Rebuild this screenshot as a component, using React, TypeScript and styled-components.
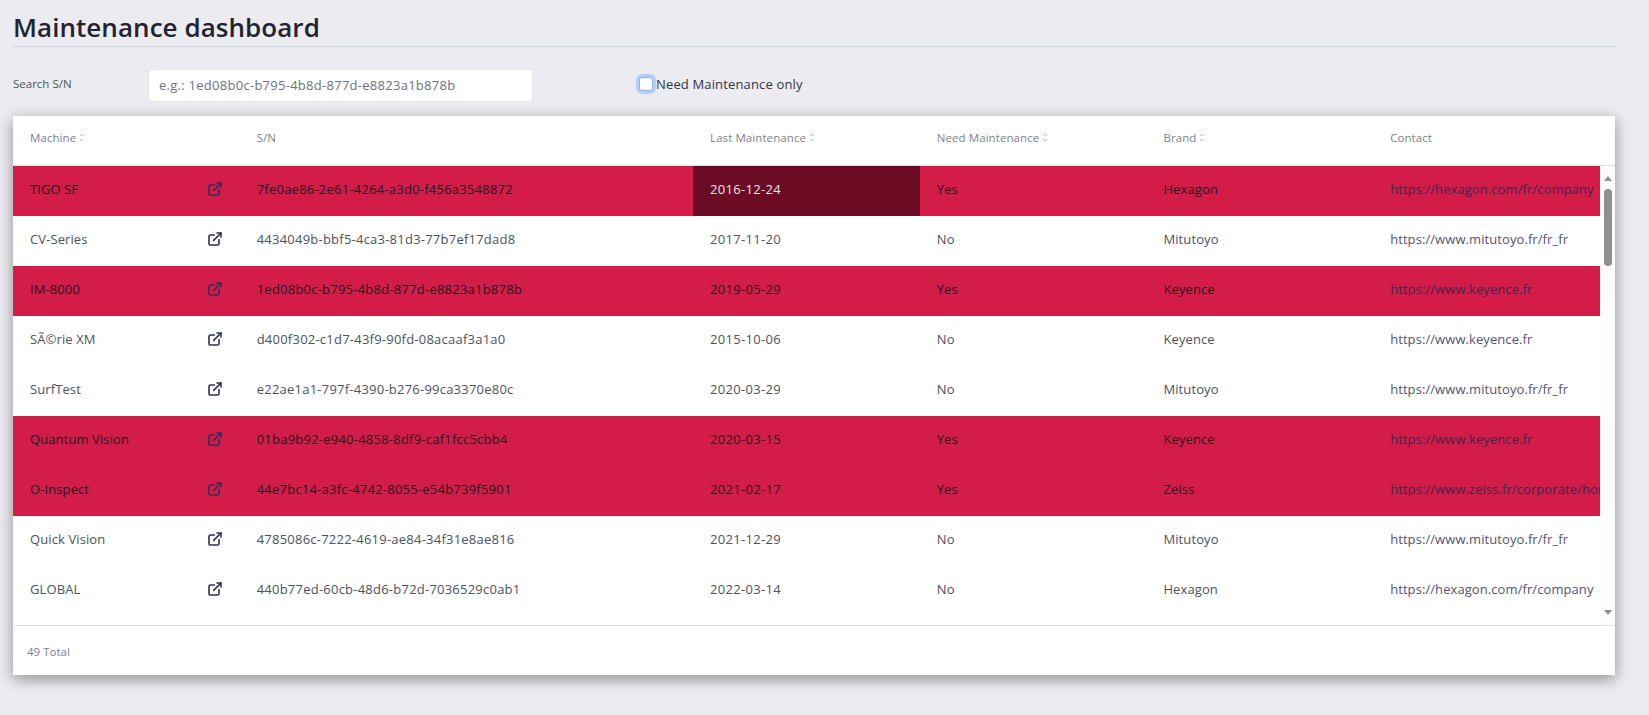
import React from 'react';
import styled, { createGlobalStyle } from 'styled-components';
import { ExternalLink } from 'lucide-react';

interface Machine {
  name: string;
  sn: string;
  last: string;
  need: boolean;
  brand: string;
  contact: string;
  overdue?: boolean;
}

const HEXAGON = 'https://hexagon.com/fr/company';
const MITUTOYO = 'https://www.mitutoyo.fr/fr_fr';
const KEYENCE = 'https://www.keyence.fr';
const ZEISS = 'https://www.zeiss.fr/corporate/home.html';

const machines: Machine[] = [
  { name: 'TIGO SF', sn: '7fe0ae86-2e61-4264-a3d0-f456a3548872', last: '2016-12-24', need: true, brand: 'Hexagon', contact: HEXAGON, overdue: true },
  { name: 'CV-Series', sn: '4434049b-bbf5-4ca3-81d3-77b7ef17dad8', last: '2017-11-20', need: false, brand: 'Mitutoyo', contact: MITUTOYO },
  { name: 'IM-8000', sn: '1ed08b0c-b795-4b8d-877d-e8823a1b878b', last: '2019-05-29', need: true, brand: 'Keyence', contact: KEYENCE },
  { name: 'SÃ©rie XM', sn: 'd400f302-c1d7-43f9-90fd-08acaaf3a1a0', last: '2015-10-06', need: false, brand: 'Keyence', contact: KEYENCE },
  { name: 'SurfTest', sn: 'e22ae1a1-797f-4390-b276-99ca3370e80c', last: '2020-03-29', need: false, brand: 'Mitutoyo', contact: MITUTOYO },
  { name: 'Quantum Vision', sn: '01ba9b92-e940-4858-8df9-caf1fcc5cbb4', last: '2020-03-15', need: true, brand: 'Keyence', contact: KEYENCE },
  { name: 'O-Inspect', sn: '44e7bc14-a3fc-4742-8055-e54b739f5901', last: '2021-02-17', need: true, brand: 'Zeiss', contact: ZEISS },
  { name: 'Quick Vision', sn: '4785086c-7222-4619-ae84-34f31e8ae816', last: '2021-12-29', need: false, brand: 'Mitutoyo', contact: MITUTOYO },
  { name: 'GLOBAL', sn: '440b77ed-60cb-48d6-b72d-7036529c0ab1', last: '2022-03-14', need: false, brand: 'Hexagon', contact: HEXAGON },
];

const GlobalStyle = createGlobalStyle`
  html, body {
    margin: 0;
    height: 100%;
    background: #ebebf0;
    font-family: 'Open Sans', 'Noto Sans', sans-serif;
    overflow: hidden;
  }
`;

const Page = styled.div`
  padding: 0 34px 0 13px;
`;

const Title = styled.h1`
  margin: 0;
  height: 47px;
  box-sizing: border-box;
  padding-top: 9px;
  font-size: 26px;
  line-height: 36px;
  font-weight: 600;
  letter-spacing: 0.05px;
  color: #1f2430;
  border-bottom: 1px solid #c5d5e6;
`;

const Filters = styled.div`
  display: flex;
  align-items: center;
  height: 69px;
  padding-top: 7px;
  box-sizing: border-box;
`;

const SearchLabel = styled.label`
  width: 135px;
  font-size: 11.5px;
  color: #4b5563;
  margin-top: -4px;
`;

const SearchInput = styled.input`
  width: 385px;
  height: 33px;
  box-sizing: border-box;
  padding: 0 10px;
  border: 1px solid #e2e5ea;
  border-radius: 4px;
  background: #fff;
  font: inherit;
  font-size: 13px;
  letter-spacing: 0.27px;
  &::placeholder {
    color: #6b7280;
    opacity: 1;
  }
`;

const CheckLabel = styled.label`
  display: flex;
  align-items: center;
  gap: 3px;
  margin-left: 106px;
  margin-top: -2px;
  font-size: 13px;
  letter-spacing: 0.15px;
  color: #2f3545;
`;

const FakeCheck = styled.span`
  width: 14px;
  height: 14px;
  box-sizing: border-box;
  border-radius: 3px;
  background: #fff;
  border: 1px solid #8db2f5;
  box-shadow: 0 0 0 3px #b7cdf6;
`;

const Card = styled.section`
  background: #fff;
  height: 559px;
  display: flex;
  flex-direction: column;
  box-shadow: 0 4px 14px rgba(0, 0, 0, 0.4);
`;

const HeaderRow = styled.div`
  display: grid;
  grid-template-columns: repeat(7, 226.7px);
  height: 49px;
  flex: none;
  box-sizing: content-box;
  border-bottom: 1px solid #dfe1e5;
`;

const HeaderCell = styled.div<{ $wide?: boolean }>`
  ${(p) => (p.$wide ? 'grid-column: span 2;' : '')}
  display: flex;
  align-items: center;
  gap: 3px;
  padding: 0 17px 7px;
  font-size: 11.5px;
  font-weight: 500;
  letter-spacing: 0.08px;
  color: #7d828c;
`;

const Middle = styled.div`
  flex: 1;
  min-height: 0;
  display: flex;
`;

const Rows = styled.div`
  width: 1587px;
  overflow: hidden;
`;

const Row = styled.div<{ $alert: boolean }>`
  display: grid;
  grid-template-columns: repeat(7, 226.7px);
  height: 50px;
  background: ${(p) => (p.$alert ? '#d41c48' : '#fff')};
  color: ${(p) => (p.$alert ? '#26171f' : '#4b5260')};
`;

const Cell = styled.div<{ $wide?: boolean; $overdue?: boolean; $spacing?: number }>`
  ${(p) => (p.$wide ? 'grid-column: span 2;' : '')}
  display: flex;
  align-items: center;
  justify-content: space-between;
  padding: 0 17px 5px;
  font-size: 13px;
  letter-spacing: ${(p) => p.$spacing ?? 0.1}px;
  white-space: nowrap;
  ${(p) => (p.$overdue ? 'background: #6b0b24; color: #f3e3e7;' : '')}
`;

const IconLink = styled.a`
  display: flex;
  color: #2f2d5b;
`;

const Contact = styled.a<{ $alert: boolean }>`
  color: ${(p) => (p.$alert ? '#41264f' : '#55536f')};
  text-decoration: none;
`;

const ScrollGutter = styled.div`
  width: 15px;
  background: #fcfcfc;
  display: flex;
  flex-direction: column;
  align-items: center;
  padding-top: 10px;
  box-sizing: border-box;
`;

const ArrowUp = styled.span`
  width: 0;
  height: 0;
  border-left: 4.5px solid transparent;
  border-right: 4.5px solid transparent;
  border-bottom: 5px solid #8f8f8f;
`;

const ArrowDown = styled.span`
  width: 0;
  height: 0;
  margin-top: auto;
  margin-bottom: 10px;
  border-left: 4.5px solid transparent;
  border-right: 4.5px solid transparent;
  border-top: 5px solid #8f8f8f;
`;

const Thumb = styled.span`
  width: 8px;
  height: 77px;
  margin-top: 8px;
  border-radius: 4px;
  background: #8f8f8f;
`;

const Footer = styled.footer`
  height: 50px;
  flex: none;
  display: flex;
  align-items: center;
  padding: 1px 0 0 14px;
  box-sizing: border-box;
  border-top: 1px solid #dfe1e5;
  font-size: 11.5px;
  color: #7d828c;
`;

const Sort = () => (
  <svg width="6" height="9" viewBox="0 0 6 9" fill="none" stroke="#bcc0c6" strokeWidth="1">
    <path d="M1 3 3 1 5 3" />
    <path d="M1 6 3 8 5 6" />
  </svg>
);

export default function App() {
  return (
    <Page>
      <GlobalStyle />
      <Title>Maintenance dashboard</Title>
      <Filters>
        <SearchLabel>Search S/N</SearchLabel>
        <SearchInput placeholder="e.g.: 1ed08b0c-b795-4b8d-877d-e8823a1b878b" />
        <CheckLabel>
          <FakeCheck />
          Need Maintenance only
        </CheckLabel>
      </Filters>
      <Card>
        <HeaderRow>
          <HeaderCell>Machine <Sort /></HeaderCell>
          <HeaderCell $wide>S/N</HeaderCell>
          <HeaderCell>Last Maintenance <Sort /></HeaderCell>
          <HeaderCell>Need Maintenance <Sort /></HeaderCell>
          <HeaderCell>Brand <Sort /></HeaderCell>
          <HeaderCell>Contact</HeaderCell>
        </HeaderRow>
        <Middle>
          <Rows>
            {machines.map((m) => (
              <Row key={m.sn} $alert={m.need}>
                <Cell>
                  {m.name}
                  <IconLink href="#"><ExternalLink size={16} strokeWidth={2.4} /></IconLink>
                </Cell>
                <Cell $wide $spacing={0.23}>{m.sn}</Cell>
                <Cell $overdue={m.overdue} $spacing={0.3}>{m.last}</Cell>
                <Cell>{m.need ? 'Yes' : 'No'}</Cell>
                <Cell>{m.brand}</Cell>
                <Cell $spacing={0.08}><Contact href={m.contact} $alert={m.need}>{m.contact}</Contact></Cell>
              </Row>
            ))}
          </Rows>
          <ScrollGutter>
            <ArrowUp />
            <Thumb />
            <ArrowDown />
          </ScrollGutter>
        </Middle>
        <Footer>49 Total</Footer>
      </Card>
    </Page>
  );
}
